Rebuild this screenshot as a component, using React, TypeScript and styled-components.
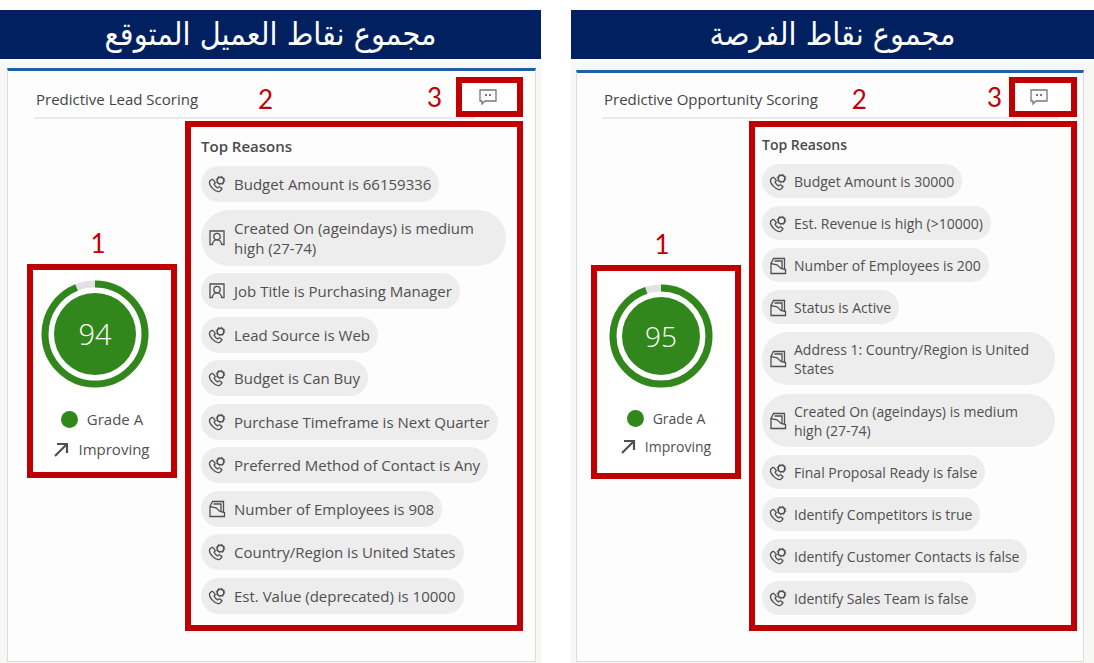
import React from "react";
import styled, { createGlobalStyle } from "styled-components";

const GlobalStyle = createGlobalStyle`
  *, *::before, *::after { box-sizing: border-box; }
  body { margin: 0; background: #fff; color: #505050; font-family: "Open Sans", "Noto Sans", sans-serif; }
  h1, h2, h3, ul { margin: 0; padding: 0; font-weight: inherit; }
`;

type Size = "regular" | "compact";

const RED = "#c00000";
const GREEN = "#31871b";

const Page = styled.main`
  display: grid;
  grid-template-columns: 541fr 523fr;
  column-gap: 30px;
  padding-top: 10px;
  min-height: 100vh;
`;

const Panel = styled.section`
  display: flex;
  flex-direction: column;
  gap: 3px;
  min-width: 0;
`;

const Banner = styled.h1`
  height: 49px;
  line-height: 49px;
  background: #002060;
  color: #fff;
  font-family: "DejaVu Sans Condensed", "DejaVu Sans", sans-serif;
  font-size: 32px;
  text-align: center;
  white-space: nowrap;
`;

const Surface = styled.div<{ $size: Size }>`
  flex: 1;
  display: flex;
  background: #f7f7f6;
  padding: ${(p) => (p.$size === "regular" ? "6px 5px 1px 7px" : "8px 10px 1px 5px")};
`;

const Card = styled.article<{ $size: Size }>`
  flex: 1;
  min-width: 0;
  background: #fdfdfd;
  border: 1px solid #dcdcdc;
  border-top: 3px solid #1f5fa8;
  padding: ${(p) => (p.$size === "regular" ? "6px 12px 0 19px" : "4px 6px 0 14px")};
  font-size: ${(p) => (p.$size === "regular" ? 15 : 14)}px;
  line-height: ${(p) => (p.$size === "regular" ? 20 : 19)}px;
`;

const CardHeader = styled.header<{ $size: Size }>`
  display: flex;
  align-items: center;
  height: 40px;
  padding-left: ${(p) => (p.$size === "regular" ? 9 : 13)}px;
`;

const CardTitle = styled.h2`
  padding-top: 4px;
  font-size: 15px;
  font-weight: 500;
  color: #444;
  white-space: nowrap;
`;

const Mark = styled.span`
  color: ${RED};
  font-family: Lato, sans-serif;
  font-size: 26px;
  line-height: 32px;
`;

const ReasonsMark = styled(Mark)<{ $size: Size }>`
  margin-left: ${(p) => (p.$size === "regular" ? 60 : 34)}px;
  padding-top: 4px;
`;

const FeedbackMark = styled(Mark)<{ $size: Size }>`
  margin-left: auto;
  margin-right: ${(p) => (p.$size === "regular" ? 14 : 7)}px;
`;

const FeedbackButton = styled.button<{ $size: Size }>`
  display: flex;
  align-items: center;
  justify-content: center;
  width: ${(p) => (p.$size === "regular" ? 67 : 68)}px;
  height: 40px;
  padding: 0 ${(p) => (p.$size === "regular" ? 4 : 9)}px 0 0;
  border: 6px solid ${RED};
  background: #fff;
  color: #777;
`;

const Divider = styled.hr<{ $size: Size }>`
  height: 2px;
  margin: ${(p) => (p.$size === "regular" ? "0 48px 2px 7px" : "0 18px 2px 11px")};
  border: 0;
  background: #ebebeb;
`;

const CardBody = styled.div`
  display: flex;
  gap: 8px;
`;

const ScoreColumn = styled.div`
  flex: 0 0 150px;
`;

const ScoreMark = styled(Mark)<{ $size: Size }>`
  display: flex;
  align-items: flex-end;
  justify-content: center;
  height: ${(p) => (p.$size === "regular" ? 143 : 144)}px;
  padding: 0 8px 5px 0;
`;

const ScoreFrame = styled.div<{ $size: Size }>`
  display: flex;
  flex-direction: column;
  align-items: center;
  height: 214px;
  border: 6px solid ${RED};
  background: #fff;
  padding-top: ${(p) => (p.$size === "regular" ? 10 : 13)}px;
`;

const Dial = styled.div<{ $size: Size }>`
  display: grid;
  place-items: center;
  align-self: flex-start;
  width: ${(p) => (p.$size === "regular" ? 108 : 104)}px;
  height: ${(p) => (p.$size === "regular" ? 108 : 104)}px;
  margin-left: ${(p) => (p.$size === "regular" ? 8 : 12)}px;
  margin-bottom: 16px;
  > * { grid-area: 1 / 1; }
`;

const DialNumber = styled.span<{ $size: Size }>`
  color: #fff;
  font-size: ${(p) => (p.$size === "regular" ? 29 : 28)}px;
  font-weight: 300;
  line-height: 40px;
`;

const ScoreLine = styled.div<{ $size: Size }>`
  display: flex;
  align-items: center;
  gap: 9px;
  height: ${(p) => (p.$size === "regular" ? 30 : 28)}px;
`;

const GradeDot = styled.span`
  width: 17px;
  height: 17px;
  border-radius: 50%;
  background: ${GREEN};
`;

const ReasonsFrame = styled.section<{ $size: Size }>`
  flex: 1;
  min-width: 0;
  display: flex;
  flex-direction: column;
  min-height: 510px;
  border: 6px solid ${RED};
  padding: ${(p) => (p.$size === "regular" ? "9px 11px 11px 10px" : "8px 16px 10px 7px")};
`;

const ReasonsTitle = styled.h3`
  font-size: inherit;
  font-weight: 600;
  margin-bottom: 10px;
  color: #4a4a4a;
`;

const ReasonList = styled.ul`
  flex: 1;
  display: flex;
  flex-direction: column;
  align-items: flex-start;
  justify-content: space-between;
  list-style: none;
`;

const Chip = styled.li<{ $size: Size }>`
  display: flex;
  align-items: center;
  gap: ${(p) => (p.$size === "regular" ? 8 : 7)}px;
  padding: ${(p) => (p.$size === "regular" ? "8px 8px 8px 7px" : "8px 8px 7px 7px")};
  border-radius: 28px;
  background: #ededed;
  > svg { flex: none; }
`;

type IconName = "call" | "contact" | "account";

const icons: Record<IconName, React.ReactNode> = {
  call: (
    <>
      <path d="M3.600 4.600 2 6c-1.200 1.600 0 4.600 2.600 7.400s5.400 3.800 7.200 2.800l1.800-1.700c.4-.5.3-1-.2-1.400l-1.600-1.100c-.5-.3-.9-.3-1.300.1l-.9.800c-1.300-.7-2.800-2.300-3.500-3.700l.8-.9c.4-.4.400-.8.100-1.300L5.200 4.800c-.4-.6-1-.7-1.600-.2z" />
      <circle cx="12.500" cy="5.500" r="3.300" strokeWidth="1.500" />
      <circle cx="12.500" cy="5.500" r="4.300" strokeWidth="1" strokeDasharray="1.400 1.977" />
    </>
  ),
  contact: (
    <>
      <path d="M4.500 15.500H2V2h14v13.500h-2.500" />
      <circle cx="9" cy="7.600" r="3.200" />
      <path d="M4.400 16c0-3 2-5.200 4.600-5.200s4.600 2.200 4.600 5.200" />
    </>
  ),
  account: (
    <>
      <path d="M2 6.500V16.500h14.500V12.500L12 11.500 8 7.800z" />
      <path d="M2 6.500 4.500 1.500H15.500V12" />
      <path d="M5.500 4H13V11.500" />
    </>
  ),
};

const Icon = ({ name }: { name: IconName }) => (
  <svg width="18" height="18" viewBox="0 0 18 18" fill="none" stroke="#505050" strokeWidth="1.3" aria-hidden="true">
    {icons[name]}
  </svg>
);

const ChatIcon = () => (
  <svg width="20" height="18" viewBox="0 0 20 18" fill="none" stroke="currentColor" strokeWidth="1.3" aria-hidden="true">
    <path d="M2 2h16v11H7l-3 3v-3H2z" />
    <path d="M8 6v2M12 6v2" strokeWidth="2" />
  </svg>
);

const ArrowIcon = () => (
  <svg width="15" height="15" viewBox="0 0 15 15" fill="none" stroke="#505050" strokeWidth="2.200" aria-hidden="true">
    <path d="M1 14 13 2M3 2h10v9" />
  </svg>
);

const ScoreDial = ({ score, size }: { score: number; size: Size }) => {
  const outer = size === "regular" ? 54 : 52;
  const r = outer - 4;
  return (
    <Dial $size={size}>
      <svg width={outer * 2} height={outer * 2} aria-hidden="true">
        <circle cx={outer} cy={outer} r={r} fill="#fff" stroke="#e2e2e4" strokeWidth="7" />
        <circle
          cx={outer}
          cy={outer}
          r={r}
          fill="none"
          stroke={GREEN}
          strokeWidth="7"
          pathLength={100}
          strokeDasharray={`${score} 100`}
          transform={`rotate(-90 ${outer} ${outer})`}
        />
        <circle cx={outer} cy={outer} r={outer - 13} fill={GREEN} />
      </svg>
      <DialNumber $size={size}>{score}</DialNumber>
    </Dial>
  );
};

interface ScorePanelProps {
  banner: string;
  title: string;
  score: number;
  size: Size;
  reasons: [IconName, string][];
}

const ScorePanel = ({ banner, title, score, size, reasons }: ScorePanelProps) => (
  <Panel>
    <Banner lang="ar" dir="rtl">{banner}</Banner>
    <Surface $size={size}>
      <Card $size={size}>
        <CardHeader $size={size}>
          <CardTitle>{title}</CardTitle>
          <ReasonsMark $size={size}>2</ReasonsMark>
          <FeedbackMark $size={size}>3</FeedbackMark>
          <FeedbackButton $size={size} type="button" aria-label="Feedback">
            <ChatIcon />
          </FeedbackButton>
        </CardHeader>
        <Divider $size={size} />
        <CardBody>
          <ScoreColumn>
            <ScoreMark $size={size}>1</ScoreMark>
            <ScoreFrame $size={size}>
              <ScoreDial score={score} size={size} />
              <ScoreLine $size={size}>
                <GradeDot />
                Grade A
              </ScoreLine>
              <ScoreLine $size={size}>
                <ArrowIcon />
                Improving
              </ScoreLine>
            </ScoreFrame>
          </ScoreColumn>
          <ReasonsFrame $size={size}>
            <ReasonsTitle>Top Reasons</ReasonsTitle>
            <ReasonList>
              {reasons.map(([icon, text]) => (
                <Chip key={text} $size={size}>
                  <Icon name={icon} />
                  <span>{text}</span>
                </Chip>
              ))}
            </ReasonList>
          </ReasonsFrame>
        </CardBody>
      </Card>
    </Surface>
  </Panel>
);

const leadReasons: [IconName, string][] = [
  ["call", "Budget Amount is 66159336"],
  ["contact", "Created On (ageindays) is medium high (27-74)"],
  ["contact", "Job Title is Purchasing Manager"],
  ["call", "Lead Source is Web"],
  ["call", "Budget is Can Buy"],
  ["call", "Purchase Timeframe is Next Quarter"],
  ["call", "Preferred Method of Contact is Any"],
  ["account", "Number of Employees is 908"],
  ["call", "Country/Region is United States"],
  ["call", "Est. Value (deprecated) is 10000"],
];

const opportunityReasons: [IconName, string][] = [
  ["call", "Budget Amount is 30000"],
  ["call", "Est. Revenue is high (>10000)"],
  ["account", "Number of Employees is 200"],
  ["account", "Status is Active"],
  ["account", "Address 1: Country/Region is United States"],
  ["account", "Created On (ageindays) is medium high (27-74)"],
  ["call", "Final Proposal Ready is false"],
  ["call", "Identify Competitors is true"],
  ["call", "Identify Customer Contacts is false"],
  ["call", "Identify Sales Team is false"],
];

export default function App() {
  return (
    <>
      <GlobalStyle />
      <Page>
        <ScorePanel
          banner="مجموع نقاط العميل المتوقع"
          title="Predictive Lead Scoring"
          score={94}
          size="regular"
          reasons={leadReasons}
        />
        <ScorePanel
          banner="مجموع نقاط الفرصة"
          title="Predictive Opportunity Scoring"
          score={95}
          size="compact"
          reasons={opportunityReasons}
        />
      </Page>
    </>
  );
}
